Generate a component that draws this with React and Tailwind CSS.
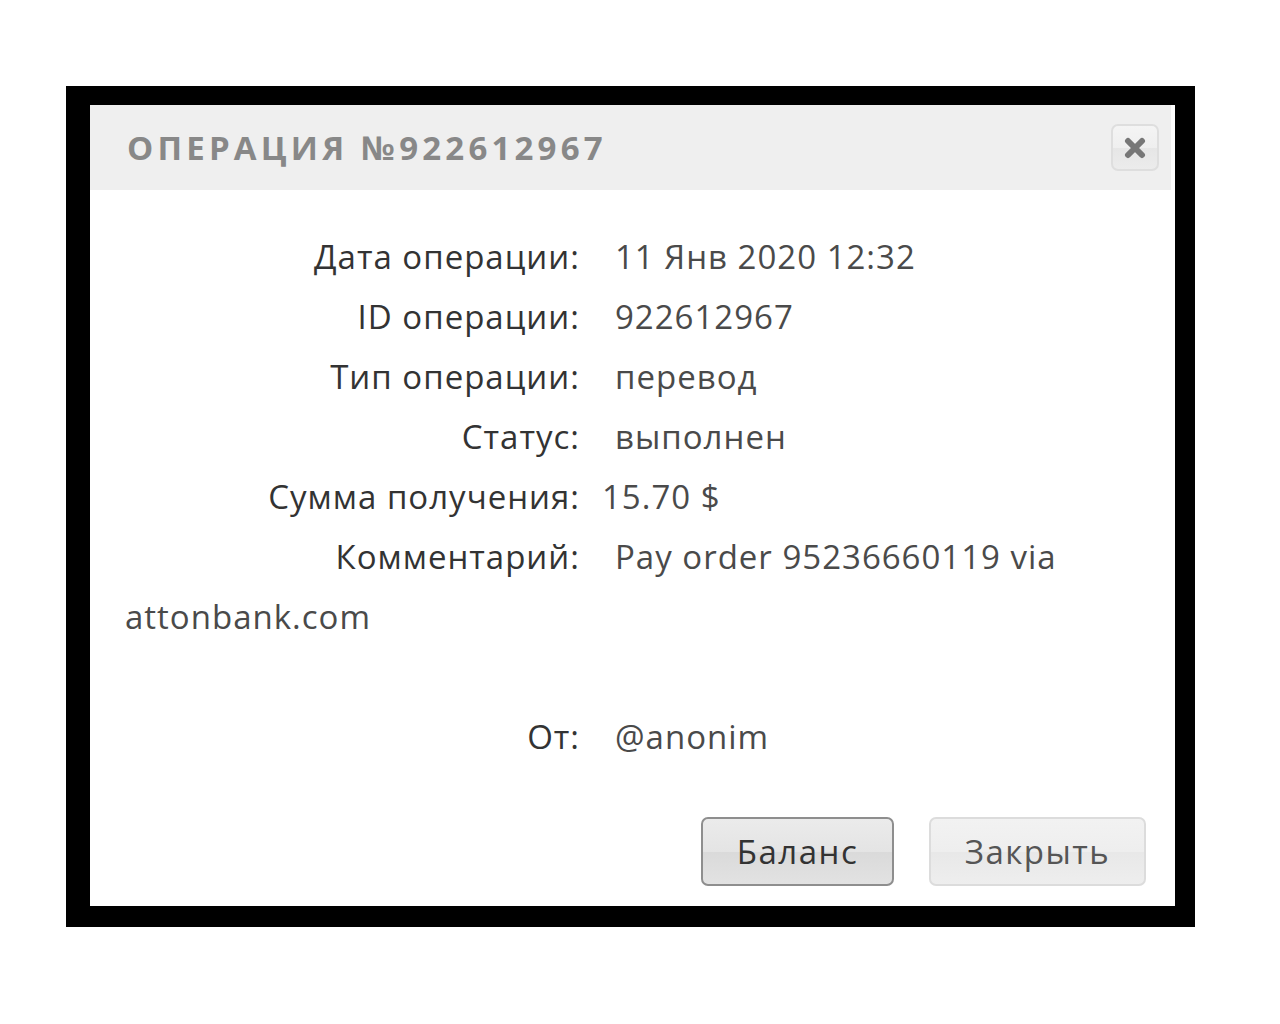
import React from "react";

const rows = [
  { label: "Дата операции:", value: "11 Янв 2020 12:32" },
  { label: "ID операции:", value: "922612967" },
  { label: "Тип операции:", value: "перевод" },
  { label: "Статус:", value: "выполнен" },
  { label: "Сумма получения:", value: "15.70 $", tight: true },
];

const App = () => {
  return (
    <div className="min-h-screen bg-white pt-[86px] pl-[66px] font-['Open_Sans',sans-serif]">
      <div className="w-[1129px] bg-black pt-[19px] pl-[24px] pr-[20px] pb-[21px]">
        <div className="bg-white h-[801px] flex flex-col">
          <div className="h-[85px] mr-[4px] bg-[#efefef] flex items-center justify-between pl-[37px] pr-[12px]">
            <p className="text-[33px] font-bold tracking-[4.2px] text-[#888]">
              ОПЕРАЦИЯ №922612967
            </p>
            <button className="w-[48px] h-[47px] rounded-[7px] border-[2px] border-[#dedede] bg-[linear-gradient(#f4f4f4_0%,#efefef_50%,#e6e6e6_51%,#ececec_100%)] flex items-center justify-center">
              <svg width="22" height="22" viewBox="0 0 22 22">
                <path d="M4 4 L18 18 M18 4 L4 18" stroke="#777" strokeWidth="6" strokeLinecap="round" />
              </svg>
            </button>
          </div>

          <div className="pl-[35px] pt-[37px] text-[33px] tracking-[1px] leading-[60px]">
            {rows.map((row, i) => (
              <div key={i} className="h-[60px] whitespace-nowrap">
                <span className="inline-block w-[455px] text-right text-[#333]">{row.label}</span>
                <span className={(row.tight ? "ml-[22px]" : "ml-[35px]") + " text-[#4a4a4a]"}>
                  {row.value}
                </span>
              </div>
            ))}
            <div className="text-[#4a4a4a] whitespace-nowrap">
              <span className="inline-block w-[455px] text-right text-[#333]">Комментарий:</span>
              <span className="ml-[35px]">Pay order 95236660119 via</span>
              <br />
              attonbank.com
            </div>
            <div className="h-[60px]"></div>
            <div className="h-[60px] whitespace-nowrap">
              <span className="inline-block w-[455px] text-right text-[#333]">От:</span>
              <span className="ml-[35px] text-[#4a4a4a]">@anonim</span>
            </div>
          </div>

          <div className="flex justify-end gap-[35px] pr-[29px] mt-[50px]">
            <button className="w-[193px] h-[69px] rounded-[7px] border-[2px] border-[#8e8e8e] bg-[linear-gradient(#ebebeb_0%,#e4e4e4_50%,#dadada_51%,#e2e2e2_100%)] text-[33px] tracking-[1.5px] text-[#333]">
              Баланс
            </button>
            <button className="w-[217px] h-[69px] rounded-[7px] border-[2px] border-[#dcdcdc] bg-[linear-gradient(#f2f2f2_0%,#eeeeee_50%,#e8e8e8_51%,#eeeeee_100%)] text-[33px] tracking-[1.5px] text-[#555]">
              Закрыть
            </button>
          </div>
        </div>
      </div>
    </div>
  );
};

export default App;
